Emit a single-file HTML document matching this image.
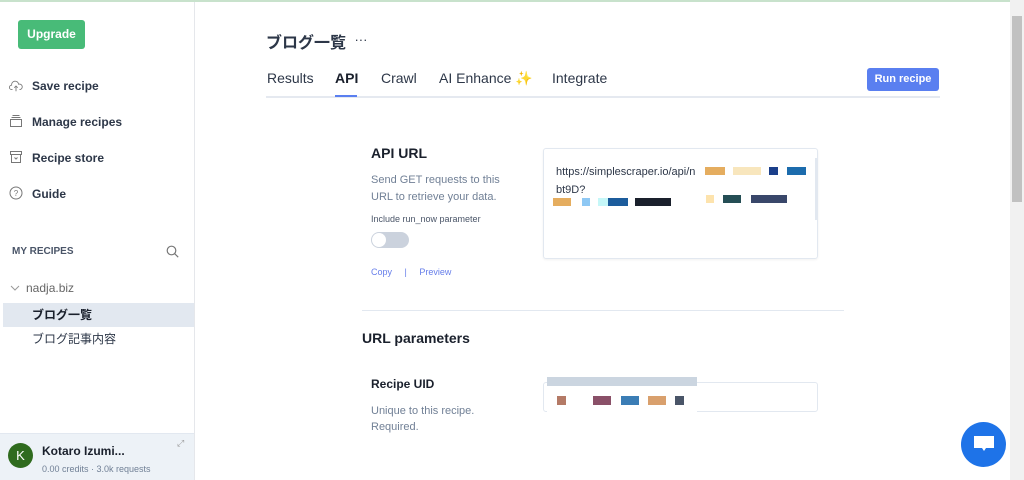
<!DOCTYPE html>
<html><head><meta charset="utf-8"><style>
*{box-sizing:border-box;margin:0;padding:0}
body{width:1024px;height:480px;overflow:hidden;background:#fff;font-family:"Liberation Sans","Noto Sans CJK JP",sans-serif;color:#1f2937;position:relative}
.abs{position:absolute}
.top{left:0;top:0;width:1024px;height:2px;background:#c8e2cc}
.side{left:0;top:2px;width:195px;height:478px;border-right:1px solid #e5e7eb}
.up{left:18px;top:20px;width:67px;height:29px;background:#48bb78;border-radius:3px;color:#fff;font-size:12px;font-weight:bold;text-align:center;line-height:29px}
.nav{left:32px;font-size:12px;font-weight:bold;color:#2d3748}
.ic{left:9px;width:14px;height:14px}
.pix{position:absolute;height:8px}
</style></head><body>
<div class="abs top"></div>
<div class="abs side"></div>
<div class="abs up">Upgrade</div>
<svg class="abs ic" style="top:79px" viewBox="0 0 16 14" fill="none" stroke="#777" stroke-width="1"><path d="M4 11H3a2.5 2.5 0 0 1 0-5 4 4 0 0 1 8-1 3 3 0 0 1 2 6h-1M8 13V7M6 9l2-2 2 2"/></svg>
<div class="abs nav" style="top:79px">Save recipe</div>
<svg class="abs ic" style="top:114px" viewBox="0 0 14 14" fill="none" stroke="#777"><rect x="1.5" y="5.5" width="11" height="7"/><path d="M2.5 3.5h9M3.5 1.5h7"/></svg>
<div class="abs nav" style="top:115px">Manage recipes</div>
<svg class="abs ic" style="top:150px" viewBox="0 0 14 14" fill="none" stroke="#777"><rect x="1.5" y="1.5" width="11" height="3"/><rect x="2.5" y="4.5" width="9" height="8"/><path d="M5.5 7.5l1.5 1.5 1.5-1.5"/></svg>
<div class="abs nav" style="top:151px">Recipe store</div>
<svg class="abs ic" style="top:186px" viewBox="0 0 14 14" fill="none" stroke="#777"><circle cx="7" cy="7" r="6"/><text x="7" y="10" font-size="8" text-anchor="middle" fill="#777" stroke="none" font-family="Liberation Sans">?</text></svg>
<div class="abs nav" style="top:187px">Guide</div>
<div class="abs" style="left:12px;top:246px;font-size:10px;font-weight:bold;color:#4a5568">MY RECIPES</div>
<svg class="abs" style="left:166px;top:245px" width="13" height="13" viewBox="0 0 13 13" fill="none" stroke="#777" stroke-width="1.2"><circle cx="5.5" cy="5.5" r="4.3"/><path d="M8.7 8.7l3.5 3.5"/></svg>
<svg class="abs" style="left:10px;top:284px" width="10" height="8" viewBox="0 0 10 8" fill="none" stroke="#999"><path d="M1 2l4 4 4-4"/></svg>
<div class="abs" style="left:26px;top:281px;font-size:12px;color:#666">nadja.biz</div>
<div class="abs" style="left:3px;top:303px;width:191px;height:24px;background:#e2e8f0"></div>
<div class="abs" style="left:32px;top:306px;font-size:12px;font-weight:bold;color:#1a202c">ブログ一覧</div>
<div class="abs" style="left:32px;top:330px;font-size:12px;color:#2d3748">ブログ記事内容</div>
<div class="abs" style="left:0;top:433px;width:194px;height:47px;background:#edf2f7;border-top:1px solid #e2e8f0"></div>
<div class="abs" style="left:8px;top:443px;width:25px;height:25px;border-radius:50%;background:#2f6b1e;color:#fff;font-size:13px;text-align:center;line-height:25px">K</div>
<div class="abs" style="left:42px;top:444px;font-size:12px;font-weight:bold;color:#1a202c">Kotaro Izumi...</div>
<div class="abs" style="left:42px;top:464px;font-size:9px;color:#718096">0.00 credits · 3.0k requests</div>
<div class="abs" style="left:177px;top:438px;font-size:9px;color:#999">⤢</div>

<div class="abs" style="left:266px;top:29px;font-size:16px;font-weight:bold;color:#2d3748">ブログ一覧 <span style="font-weight:normal;font-size:13px;position:relative;top:-4px;margin-left:4px">···</span></div>
<div class="abs" style="left:266px;top:96px;width:674px;height:2px;background:#e5e9f0"></div>
<div class="abs" style="left:335px;top:95px;width:22px;height:2px;background:#5a7ff0"></div>
<div class="abs" style="left:267px;top:70px;font-size:14px;color:#2d3748">Results</div>
<div class="abs" style="left:335px;top:70px;font-size:14px;color:#1a202c;font-weight:bold">API</div>
<div class="abs" style="left:381px;top:70px;font-size:14px;color:#2d3748">Crawl</div>
<div class="abs" style="left:439px;top:70px;font-size:14px;color:#2d3748">AI Enhance <span style="color:#e6c200">✨</span></div>
<div class="abs" style="left:552px;top:70px;font-size:14px;color:#2d3748">Integrate</div>
<div class="abs" style="left:867px;top:68px;width:72px;height:23px;background:#5a7ff0;border-radius:3px;color:#fff;font-size:11px;font-weight:bold;text-align:center;line-height:23px">Run recipe</div>

<div class="abs" style="left:371px;top:145px;font-size:14px;font-weight:bold;color:#1a202c">API URL</div>
<div class="abs" style="left:371px;top:172px;font-size:11px;color:#718096;line-height:17px">Send GET requests to this<br>URL to retrieve your data.</div>
<div class="abs" style="left:371px;top:214px;font-size:9px;color:#4a5568">Include run_now parameter</div>
<div class="abs" style="left:371px;top:232px;width:38px;height:16px;border-radius:8px;background:#cbd2dd"></div>
<div class="abs" style="left:372px;top:233px;width:14px;height:14px;border-radius:50%;background:#fff"></div>
<div class="abs" style="left:371px;top:267px;font-size:9px;color:#667eea">Copy &nbsp;&nbsp;&nbsp;&nbsp;|&nbsp;&nbsp;&nbsp;&nbsp; Preview</div>
<div class="abs" style="left:543px;top:148px;width:275px;height:111px;border:1px solid #e2e8f0;border-radius:3px;box-shadow:0 1px 2px rgba(0,0,0,.06)"></div>
<div class="abs" style="left:815px;top:158px;width:3px;height:62px;background:#e2e8f0"></div>
<div class="abs" style="left:556px;top:163px;font-size:11px;color:#2d3748;line-height:18px">https://simplescraper.io/api/n<br>bt9D?</div>
<div class="pix" style="left:705px;top:167px;width:20px;background:#e5ad5f"></div><div class="pix" style="left:733px;top:167px;width:28px;background:#f8e6bd"></div><div class="pix" style="left:769px;top:167px;width:9px;background:#1b3f8a"></div><div class="pix" style="left:787px;top:167px;width:19px;background:#1c6cad"></div>
<div class="pix" style="left:553px;top:198px;width:18px;background:#e5ad5f"></div><div class="pix" style="left:582px;top:198px;width:8px;background:#8ec8f4"></div><div class="pix" style="left:598px;top:198px;width:10px;background:#c5f7f8"></div><div class="pix" style="left:608px;top:198px;width:20px;background:#1c5c9c"></div><div class="pix" style="left:635px;top:198px;width:36px;background:#1a202c"></div>
<div class="pix" style="left:706px;top:195px;width:8px;background:#fde3ad"></div><div class="pix" style="left:723px;top:195px;width:18px;background:#254e55"></div><div class="pix" style="left:751px;top:195px;width:36px;background:#39476a"></div>
<div class="abs" style="left:362px;top:310px;width:482px;height:1px;background:#e2e8f0"></div>
<div class="abs" style="left:362px;top:330px;font-size:14px;font-weight:bold;color:#1a202c">URL parameters</div>
<div class="abs" style="left:371px;top:377px;font-size:12px;font-weight:bold;color:#1a202c">Recipe UID</div>
<div class="abs" style="left:371px;top:403px;font-size:11px;color:#718096;line-height:16px">Unique to this recipe.<br>Required.</div>
<div class="abs" style="left:543px;top:382px;width:275px;height:30px;border:1px solid #e2e8f0;border-radius:3px"></div>
<div class="abs" style="left:547px;top:377px;width:150px;height:9px;background:#cbd5e0"></div>
<div class="abs" style="left:547px;top:386px;width:150px;height:27px;background:#fff"></div>
<div class="pix" style="left:557px;top:396px;width:9px;height:9px;background:#b47a66"></div><div class="pix" style="left:593px;top:396px;width:18px;height:9px;background:#8a5068"></div><div class="pix" style="left:621px;top:396px;width:18px;height:9px;background:#3b7db5"></div><div class="pix" style="left:648px;top:396px;width:18px;height:9px;background:#d9a06d"></div><div class="pix" style="left:675px;top:396px;width:9px;height:9px;background:#4a5568"></div>
<div class="abs" style="left:961px;top:422px;width:45px;height:45px;border-radius:50%;background:#1e73e8"></div>
<svg class="abs" style="left:972px;top:434px" width="24" height="22" viewBox="0 0 24 22"><path d="M2 2h20v12H14l-2 3-2-3H2z" fill="#fff"/></svg>
<div class="abs" style="left:1010px;top:0;width:14px;height:480px;background:#f1f1f1"></div>
<div class="abs" style="left:1012px;top:16px;width:10px;height:186px;background:#c1c1c1"></div>
</body></html>
